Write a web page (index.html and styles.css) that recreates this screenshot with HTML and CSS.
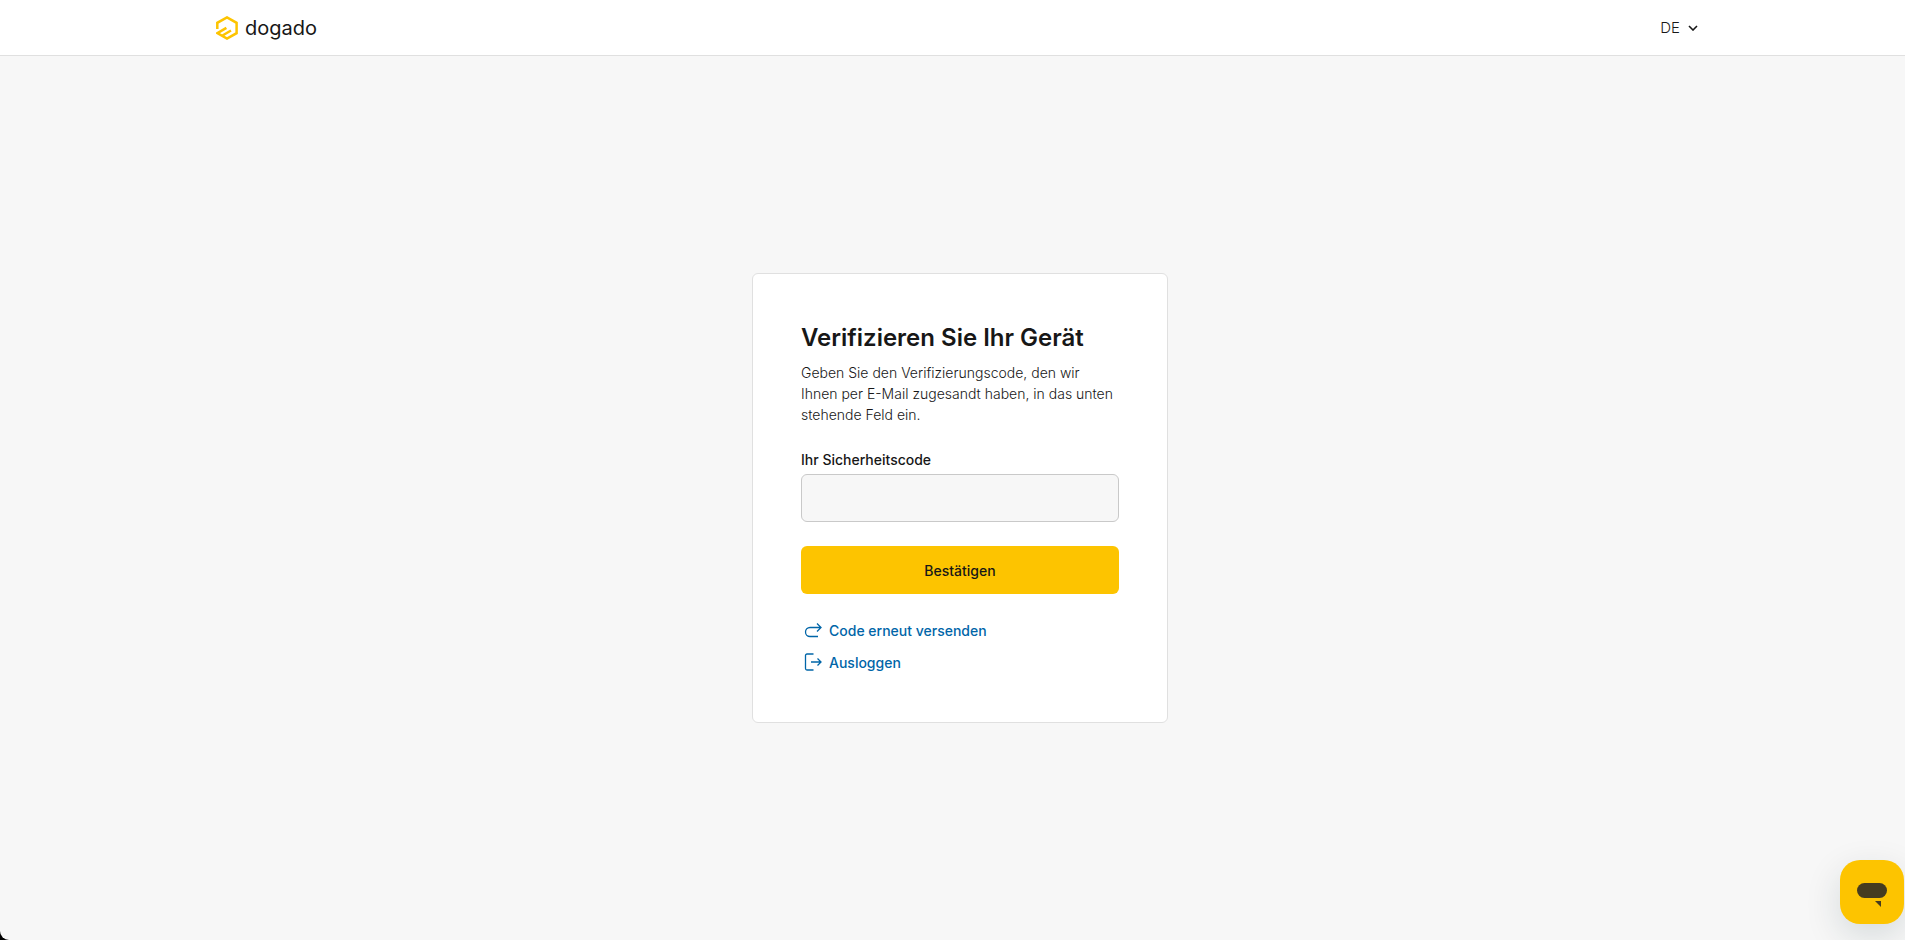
FILE: index.html
```
<!DOCTYPE html>
<html lang="de">
<head>
    <meta charset="UTF-8">
    <meta name="viewport" content="width=device-width, initial-scale=1.0">
    <title>dogado</title>
    <link rel="stylesheet" href="styles.css">
</head>
<body>
    <header class="header">
        <div class="header-inner">
            <a class="logo" href="#">
                <svg class="logo-mark" viewBox="0 0 22 24" fill="none" stroke="#fdc400" stroke-width="2.5">
                    <path d="M1.300 13V6.800L11 1.400l9.600 5.400v10.400L11 22.600l-9.600-5.500 9-5.200M6.500 19.500l8.500-5"/>
                </svg>
                <span>dogado</span>
            </a>
            <button class="language" type="button">
                <span>DE</span>
                <svg class="chevron" viewBox="0 0 10 6" fill="none" stroke="currentColor" stroke-width="1.6">
                    <path d="M1 1l4 4 4-4"/>
                </svg>
            </button>
        </div>
    </header>

    <main class="main">
        <section class="card">
            <h1>Verifizieren Sie Ihr Gerät</h1>
            <p>Geben Sie den Verifizierungscode, den wir Ihnen per E-Mail zugesandt haben, in das unten stehende Feld ein.</p>
            <form>
                <label for="code">Ihr Sicherheitscode</label>
                <input type="text" id="code" name="code">
                <button class="submit" type="submit">Bestätigen</button>
            </form>
            <nav class="links">
                <a href="#">
                    <svg viewBox="0 0 24 24" fill="none" stroke="currentColor" stroke-width="1.3">
                        <path d="M17 18.500H9a4.500 4.500 0 0 1 0-9h10.500M16 5.500l4 4-4 4"/>
                    </svg>
                    <span>Code erneut versenden</span>
                </a>
                <a href="#">
                    <svg viewBox="0 0 24 24" fill="none" stroke="currentColor" stroke-width="1.3">
                        <path d="M12.500 4H6a1.500 1.500 0 0 0-1.500 1.500v13A1.500 1.500 0 0 0 6 20h6.500M10 12h10M16.500 8.500L20 12l-3.500 3.500"/>
                    </svg>
                    <span>Ausloggen</span>
                </a>
            </nav>
        </section>
    </main>

    <button class="chat" type="button" aria-label="Chat">
        <svg viewBox="0 0 64 64" fill="#453c20">
            <rect x="17" y="23" width="30" height="15" rx="7.500"/>
            <path d="M35 41h6v6z"/>
        </svg>
    </button>
</body>
</html>
```
FILE: styles.css
```
* {
    box-sizing: border-box;
}

html {
    background-color: #000;
}

body {
    display: flex;
    flex-direction: column;
    min-height: 100vh;
    margin: 0;
    padding: 0;
    background-color: #f7f7f7;
    border-bottom-left-radius: 9px;
    color: #171717;
    font-family: 'Inter', sans-serif;
    font-size: 14px;
    line-height: 21px;
}

h1, p {
    margin: 0;
}

a {
    text-decoration: none;
}

button {
    border: none;
    font-family: inherit;
    cursor: pointer;
}

.header {
    padding-left: 15px;
    background-color: #fff;
    border-bottom: 1px solid #e0e0e0;
}

.header-inner {
    display: flex;
    align-items: center;
    justify-content: space-between;
    max-width: 1504px;
    height: 55px;
    margin: 0 auto;
    padding: 0 8px;
}

.logo {
    display: flex;
    align-items: center;
    gap: 7px;
    color: #171717;
    font-size: 20px;
    line-height: 24px;
}

.logo-mark {
    width: 22px;
    height: 24px;
}

.language {
    display: flex;
    align-items: center;
    gap: 8px;
    padding: 0 6px;
    background: none;
    color: #171717;
    font-size: 15px;
    font-weight: 300;
}

.chevron {
    width: 10px;
    height: 6px;
}

.main {
    display: flex;
    flex: 1;
    align-items: center;
    justify-content: center;
    padding-left: 15px;
}

.card {
    width: 416px;
    padding: 48px;
    background-color: #fff;
    border: 1px solid #e0e0e0;
    border-radius: 6px;
}

h1 {
    margin-bottom: 8px;
    font-size: 24px;
    font-weight: 600;
    line-height: 32px;
}

p {
    font-weight: 300;
}

form {
    display: flex;
    flex-direction: column;
    margin: 24px 0;
}

label {
    margin-bottom: 4px;
    font-weight: 500;
}

input {
    height: 48px;
    padding: 0 12px;
    background-color: #f7f7f7;
    border: 1px solid #c9c9c9;
    border-radius: 6px;
    font: inherit;
}

.submit {
    height: 48px;
    margin-top: 24px;
    background-color: #fdc400;
    border-radius: 6px;
    color: #171717;
    font-size: 14px;
    font-weight: 500;
}

.links {
    display: flex;
    flex-direction: column;
    align-items: flex-start;
    gap: 8px;
}

.links a {
    display: flex;
    align-items: center;
    gap: 4px;
    color: #0065a8;
    font-weight: 500;
}

.links svg {
    width: 24px;
    height: 24px;
}

.chat {
    position: fixed;
    right: 1px;
    bottom: 16px;
    width: 64px;
    height: 64px;
    padding: 0;
    background-color: #fdc400;
    border-radius: 20px;
    box-shadow: 0 12px 36px rgba(0, 40, 50, 0.14);
}

.chat svg {
    display: block;
}
```
